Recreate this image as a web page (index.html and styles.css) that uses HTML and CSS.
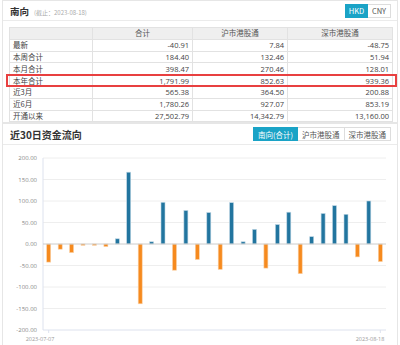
FILE: index.html
```html
<!DOCTYPE html>
<html lang="zh-CN">
<head>
  <meta charset="UTF-8">
  <title>南向资金</title>
  <link rel="stylesheet" href="styles.css">
</head>
<body>
  <section class="panel">
    <div class="panel-head">
      <h2 class="panel-title">南向<span class="as-of">(截止：2023-08-18)</span></h2>
      <div class="switch">
        <span class="btn on">HKD</span><span class="btn">CNY</span>
      </div>
    </div>

    <div class="table-wrap">
      <table class="flow-table">
        <colgroup>
          <col class="c-label"><col class="c-total"><col class="c-sh"><col class="c-sz">
        </colgroup>
        <thead>
          <tr><th></th><th>合计</th><th>沪市港股通</th><th>深市港股通</th></tr>
        </thead>
        <tbody>
          <tr><td>最新</td><td>-40.91</td><td>7.84</td><td>-48.75</td></tr>
          <tr><td>本周合计</td><td>184.40</td><td>132.46</td><td>51.94</td></tr>
          <tr><td>本月合计</td><td>398.47</td><td>270.46</td><td>128.01</td></tr>
          <tr><td>本年合计</td><td>1,791.99</td><td>852.63</td><td>939.36</td></tr>
          <tr><td>近3月</td><td>565.38</td><td>364.50</td><td>200.88</td></tr>
          <tr><td>近6月</td><td>1,780.26</td><td>927.07</td><td>853.19</td></tr>
          <tr><td>开通以来</td><td>27,502.79</td><td>14,342.79</td><td>13,160.00</td></tr>
        </tbody>
      </table>
      <!-- marks the 本年合计 row -->
      <div class="highlight"></div>
    </div>
  </section>

  <section class="panel chart-panel">
    <div class="panel-head chart-head">
      <h2 class="panel-title big">近30日资金流向</h2>
      <div class="switch">
        <span class="btn on">南向(合计)</span><span class="btn">沪市港股通</span><span class="btn">深市港股通</span>
      </div>
    </div>

    <svg class="chart" width="394" height="204" viewBox="3 143 394 204">
      <g class="grid">
        <line x1="43" y1="156" x2="386" y2="156"/>
        <line x1="43" y1="177.5" x2="386" y2="177.5"/>
        <line x1="43" y1="199" x2="386" y2="199"/>
        <line x1="43" y1="220.5" x2="386" y2="220.5"/>
        <line x1="43" y1="263.5" x2="386" y2="263.5"/>
        <line x1="43" y1="285" x2="386" y2="285"/>
        <line x1="43" y1="306.5" x2="386" y2="306.5"/>
      </g>
      <line class="axis" x1="43" y1="156" x2="43" y2="328"/>
      <line class="axis" x1="43" y1="328" x2="386" y2="328"/>
      <line class="axis" x1="48.7" y1="328" x2="48.7" y2="331"/>
      <line class="axis" x1="380.3" y1="328" x2="380.3" y2="331"/>

      <g class="y-labels">
        <text x="37" y="158">200.00</text>
        <text x="37" y="179.5">150.00</text>
        <text x="37" y="201">100.00</text>
        <text x="37" y="222.5">50.00</text>
        <text x="37" y="244">0.00</text>
        <text x="37" y="265.5">-50.00</text>
        <text x="37" y="287">-100.00</text>
        <text x="37" y="308.5">-150.00</text>
        <text x="37" y="330">-200.00</text>
      </g>

      <g class="bars">
        <rect class="neg" x="46.7" y="242" width="4" height="18.1"/>
        <rect class="neg" x="58.2" y="242" width="4" height="5.2"/>
        <rect class="neg" x="69.6" y="242" width="4" height="8.6"/>
        <rect class="neg" x="81" y="242" width="4" height="1.3"/>
        <rect class="neg" x="92.4" y="242" width="4" height="1.3"/>
        <rect class="neg" x="103.9" y="242" width="4" height="2.6"/>
        <rect class="pos" x="115.3" y="236.8" width="4" height="5.2"/>
        <rect class="pos" x="126.7" y="170.2" width="4" height="71.8"/>
        <rect class="neg" x="138.2" y="242" width="4" height="59.8"/>
        <rect class="pos" x="149.6" y="239.8" width="4" height="2.2"/>
        <rect class="pos" x="161" y="200.3" width="4" height="41.7"/>
        <rect class="neg" x="172.5" y="242" width="4" height="26.2"/>
        <rect class="pos" x="183.9" y="208.5" width="4" height="33.5"/>
        <rect class="neg" x="195.3" y="242" width="4" height="15.5"/>
        <rect class="pos" x="206.8" y="210.6" width="4" height="31.4"/>
        <rect class="neg" x="218.2" y="242" width="4" height="25.4"/>
        <rect class="pos" x="229.6" y="200.7" width="4" height="41.3"/>
        <rect class="pos" x="241.1" y="239.8" width="4" height="2.2"/>
        <rect class="pos" x="252.5" y="227.4" width="4" height="14.6"/>
        <rect class="neg" x="263.9" y="242" width="4" height="24.1"/>
        <rect class="pos" x="275.4" y="222.6" width="4" height="19.4"/>
        <rect class="pos" x="286.8" y="210.2" width="4" height="31.8"/>
        <rect class="neg" x="298.2" y="242" width="4" height="29.7"/>
        <rect class="pos" x="309.7" y="234.7" width="4" height="7.3"/>
        <rect class="pos" x="321.1" y="211.5" width="4" height="30.5"/>
        <rect class="pos" x="332.5" y="203.7" width="4" height="38.3"/>
        <rect class="pos" x="344" y="212.3" width="4" height="29.7"/>
        <rect class="neg" x="355.4" y="242" width="4" height="12.9"/>
        <rect class="pos" x="366.8" y="199" width="4" height="43"/>
        <rect class="neg" x="378.3" y="242" width="4" height="17.6"/>
      </g>
      <line class="zero" x1="43" y1="242" x2="386" y2="242"/>

      <g class="x-labels">
        <text x="40" y="339">2023-07-07</text>
        <text x="370" y="339">2023-08-18</text>
      </g>
    </svg>
  </section>
</body>
</html>
```

FILE: styles.css
```css
body {
  margin: 0;
  background-color: #fff;
  color: #333;
  font-family: "Open Sans", "Noto Sans CJK SC", sans-serif;
  overflow: hidden;
}

.panel {
  margin: 0 2px;
  border: 1px solid #e6e6e6;
  background-color: #fff;
}

.panel-head {
  display: flex;
  justify-content: space-between;
  align-items: center;
  height: 19px;
  padding: 0 6px 0 7px;
  border-bottom: 1px solid #ebebeb;
}

.panel-title {
  margin: 0;
  font-family: "Noto Sans CJK SC", sans-serif;
  font-size: 9.5px;
  font-weight: bold;
  color: #333;
}

.panel-title.big {
  font-size: 10px;
}

.as-of {
  margin-left: 5px;
  font-size: 6px;
  font-weight: normal;
  color: #aaa;
}

.switch {
  display: flex;
}

.btn {
  display: flex;
  align-items: center;
  justify-content: center;
  box-sizing: border-box;
  height: 14px;
  width: 23px;
  border: 1px solid #ddd;
  font-family: "Noto Sans CJK SC", sans-serif;
  font-size: 7.5px;
  color: #555;
  background-color: #fff;
}

.btn + .btn {
  border-left: none;
}

.btn.on {
  background-color: #1aa3c6; /* teal active tab */
  border-color: #1aa3c6;
  color: #fff;
}

.table-wrap {
  position: relative;
  padding: 6px 4px 0 6px;
}

.flow-table {
  width: 383px;
  border-collapse: collapse;
  table-layout: fixed;
  font-size: 7.5px;
  line-height: 8px;
  color: #444;
}

.c-label { width: 83px; }
.c-total { width: 100px; }
.c-sh { width: 95px; }
.c-sz { width: 105px; }

.flow-table tr {
  height: 11.8px;
}

.flow-table th,
.flow-table td {
  padding: 0 3px;
  border: 1px solid #e2e2e2;
  white-space: nowrap;
  overflow: hidden;
}

.flow-table th {
  background-color: #efefef;
  font-weight: normal;
  color: #555;
  text-align: center;
  font-family: "Noto Sans CJK SC", sans-serif;
}

.flow-table td {
  text-align: right;
}

.flow-table td:first-child {
  text-align: left;
  font-family: "Noto Sans CJK SC", sans-serif;
}

.highlight {
  position: absolute;
  left: 3px;
  top: 53px;
  width: 391px;
  height: 13px;
  box-sizing: border-box;
  border: 2px solid #e84040;
}

.chart-panel {
  border-bottom: none;
}

.chart-head {
  height: 20px;
}

.chart-head .btn {
  width: auto;
  padding: 0 4px;
}

.chart {
  display: block;
}

.grid line {
  stroke: #eeeeee;
  stroke-width: 1;
}

.axis {
  stroke: #dde2ee;
  stroke-width: 1;
}

.zero {
  stroke: #cccccc;
  stroke-width: 1;
}

.y-labels text {
  font-family: "Open Sans", sans-serif;
  font-size: 6px;
  fill: #888;
  text-anchor: end;
}

.x-labels text {
  font-family: "Open Sans", sans-serif;
  font-size: 5.5px;
  fill: #999;
  text-anchor: middle;
}

.bars .pos {
  fill: #22759f;
  stroke: #bcd5e3;
  stroke-width: 0.6;
}

.bars .neg {
  fill: #f68a1e;
  stroke: #fbd2a8;
  stroke-width: 0.6;
}
```
